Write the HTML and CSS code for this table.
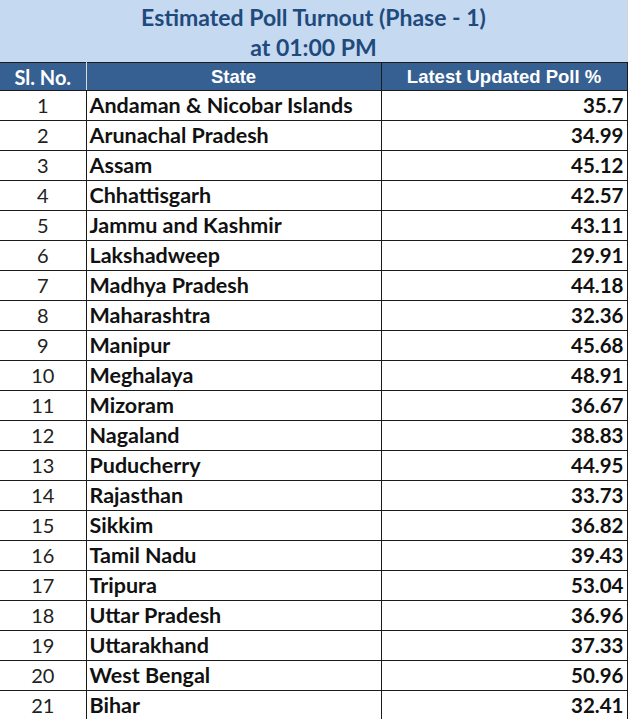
FILE: index.html
```html
<!DOCTYPE html>
<html>
<head>
<meta charset="utf-8">
<link rel="stylesheet" href="styles.css">
</head>
<body>
<div class="sheet">
  <div class="title">
    <div class="title-line">Estimated Poll Turnout (Phase - 1)</div>
    <div class="title-line">at 01:00 PM</div>
  </div>
  <table class="grid">
    <colgroup>
      <col class="c-no">
      <col class="c-state">
      <col class="c-val">
    </colgroup>
    <thead>
      <tr><th class="h-no">Sl. No.</th><th>State</th><th>Latest Updated Poll %</th></tr>
    </thead>
    <tbody>
      <tr><td class="no">1</td><td class="state">Andaman &amp; Nicobar Islands</td><td class="val">35.7</td></tr>
      <tr><td class="no">2</td><td class="state">Arunachal Pradesh</td><td class="val">34.99</td></tr>
      <tr><td class="no">3</td><td class="state">Assam</td><td class="val">45.12</td></tr>
      <tr><td class="no">4</td><td class="state">Chhattisgarh</td><td class="val">42.57</td></tr>
      <tr><td class="no">5</td><td class="state">Jammu and Kashmir</td><td class="val">43.11</td></tr>
      <tr><td class="no">6</td><td class="state">Lakshadweep</td><td class="val">29.91</td></tr>
      <tr><td class="no">7</td><td class="state">Madhya Pradesh</td><td class="val">44.18</td></tr>
      <tr><td class="no">8</td><td class="state">Maharashtra</td><td class="val">32.36</td></tr>
      <tr><td class="no">9</td><td class="state">Manipur</td><td class="val">45.68</td></tr>
      <tr><td class="no">10</td><td class="state">Meghalaya</td><td class="val">48.91</td></tr>
      <tr><td class="no">11</td><td class="state">Mizoram</td><td class="val">36.67</td></tr>
      <tr><td class="no">12</td><td class="state">Nagaland</td><td class="val">38.83</td></tr>
      <tr><td class="no">13</td><td class="state">Puducherry</td><td class="val">44.95</td></tr>
      <tr><td class="no">14</td><td class="state">Rajasthan</td><td class="val">33.73</td></tr>
      <tr><td class="no">15</td><td class="state">Sikkim</td><td class="val">36.82</td></tr>
      <tr><td class="no">16</td><td class="state">Tamil Nadu</td><td class="val">39.43</td></tr>
      <tr><td class="no">17</td><td class="state">Tripura</td><td class="val">53.04</td></tr>
      <tr><td class="no">18</td><td class="state">Uttar Pradesh</td><td class="val">36.96</td></tr>
      <tr><td class="no">19</td><td class="state">Uttarakhand</td><td class="val">37.33</td></tr>
      <tr><td class="no">20</td><td class="state">West Bengal</td><td class="val">50.96</td></tr>
      <tr><td class="no">21</td><td class="state">Bihar</td><td class="val">32.41</td></tr>
    </tbody>
  </table>
</div>
</body>
</html>
```

FILE: styles.css
```css
html, body {
  margin: 0;
  padding: 0;
  background: #ffffff;
}

.sheet {
  width: 627px;
  border-right: 1px solid #d4d4d4;
}

.title {
  height: 62px;
  background: #c5d9f1;
  color: #1f4a7c;
  font-family: Lato, "Open Sans", sans-serif;
  font-weight: 700;
  font-size: 23px;
  text-align: center;
  box-sizing: border-box;
  padding-top: 2px;
}

.title-line {
  height: 30px;
  line-height: 30px;
}

.grid {
  width: 627px;
  border-collapse: collapse;
  table-layout: fixed;
}

.c-no { width: 86px; }
.c-state { width: 295px; }
.c-val { width: 246px; }

.grid th {
  background: #376092;
  color: #ffffff;
  font-family: "Liberation Sans", Arial, sans-serif;
  font-weight: 700;
  font-size: 18.5px;
  height: 27px;
  padding: 0;
  border: 1px solid #1b1b1b;
  border-left: none;
}

.grid th.h-no {
  border-right: 1px solid #d9d9d9;
  font-family: Lato, "Open Sans", sans-serif;
  font-size: 20px;
}

.grid td {
  height: 29px;
  padding: 0;
  border: 1px solid #1b1b1b;
  font-family: Lato, "Open Sans", sans-serif;
  font-size: 20px;
  color: #111111;
  line-height: 29px;
  white-space: nowrap;
}

.grid td.no {
  text-align: center;
  font-weight: 400;
  border-left: none;
  color: #222222;
}

.grid td.state {
  font-weight: 700;
  font-size: 21.5px;
  padding-left: 3px;
}

.grid td.val {
  font-weight: 700;
  font-size: 20.5px;
  text-align: right;
  padding-right: 3px;
}
```
